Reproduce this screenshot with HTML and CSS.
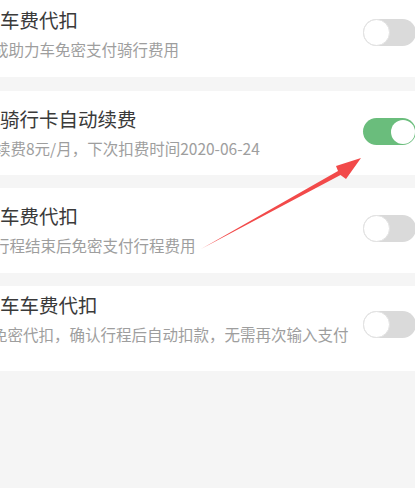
FILE: index.html
```html
<!DOCTYPE html>
<html lang="zh-CN">
<head>
<meta charset="utf-8">
<title>免密支付设置</title>
<link rel="stylesheet" href="styles.css">
</head>
<body>
<div class="page">
  <section class="card card-first">
    <div class="text">
      <div class="title">车费代扣</div>
      <div class="sub sub-a">成助力车免密支付骑行费用</div>
    </div>
    <div class="toggle"><span class="knob"></span></div>
  </section>

  <section class="card card-mid">
    <div class="text">
      <div class="title">骑行卡自动续费</div>
      <div class="sub sub-b">续费8元/月，下次扣费时间2020-06-24</div>
    </div>
    <div class="toggle on"><span class="knob"></span></div>
  </section>

  <section class="card card-third">
    <div class="text">
      <div class="title">车费代扣</div>
      <div class="sub sub-c">行程结束后免密支付行程费用</div>
    </div>
    <div class="toggle"><span class="knob"></span></div>
  </section>

  <section class="card card-last">
    <div class="text">
      <div class="title">车车费代扣</div>
      <div class="sub sub-d">免密代扣，确认行程后自动扣款，无需再次输入支付</div>
    </div>
    <div class="toggle toggle-low"><span class="knob"></span></div>
  </section>

  <svg class="arrow" width="415" height="488" viewBox="0 0 415 488" aria-hidden="true">
    <polygon points="201,249 340.5,175 346,179 361,158 336,166 338,171" fill="#f24a4a"/>
  </svg>
</div>
</body>
</html>
```

FILE: styles.css
```css
html, body {
  margin: 0;
  padding: 0;
  background: #f5f5f5;
}

body {
  font-family: "Noto Sans CJK SC", "Noto Sans", sans-serif;
  width: 415px;
  height: 488px;
  overflow: hidden;
}

.page {
  position: relative;
  display: flex;
  flex-direction: column;
  gap: 13px;
}

.card {
  background: #ffffff;
  display: flex;
  align-items: center;
  overflow: hidden;
}

.card-first { padding: 5px 0 17px; margin-bottom: 1px; }
.card-mid   { padding: 13px 0 16px; }
.card-third { padding: 13px 0 17px; }
.card-last  { padding: 4px 0 26px; }

.text {
  flex: 1;
  min-width: 0;
  display: flex;
  flex-direction: column;
  gap: 3px;
}

.title {
  font-size: 19.5px;
  line-height: 30px;
  color: #3a3a3a;
  white-space: nowrap;
}

.sub {
  font-size: 15.5px;
  line-height: 22px;
  color: #9e9e9e;
  white-space: nowrap;
}

.sub-a { margin-left: -7px; }
.sub-b { margin-left: -5px; }
.sub-c { margin-left: -6px; }
.sub-d { margin-left: -8px; }

.toggle {
  flex: none;
  width: 53px;
  height: 27px;
  margin-right: -1px;
  border-radius: 14px;
  background: #dadada;
  display: flex;
  align-items: center;
  justify-content: flex-start;
  box-sizing: border-box;
}

.toggle .knob {
  width: 27px;
  height: 27px;
  border-radius: 50%;
  background: #ffffff;
  box-sizing: border-box;
  border: 1px solid #e2e2e2;
}

.toggle.on {
  background: #6abd7c;
  justify-content: flex-end;
  padding-right: 1.5px;
}

.toggle.on .knob {
  width: 24px;
  height: 24px;
  border: none;
}

.toggle-low {
  margin-top: 14px;
}

.arrow {
  position: absolute;
  left: 0;
  top: 0;
  pointer-events: none;
}
```
